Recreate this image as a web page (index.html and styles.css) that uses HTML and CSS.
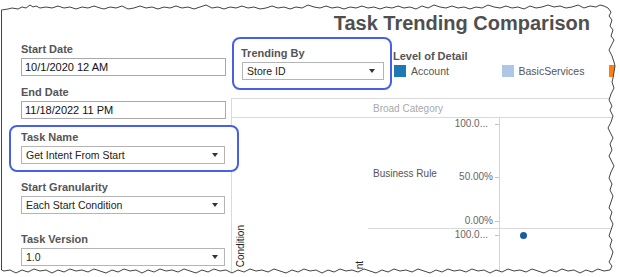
FILE: index.html
```html
<!DOCTYPE html>
<html>
<head>
<meta charset="utf-8">
<link rel="stylesheet" href="styles.css">
</head>
<body>
<div class="page">
  <aside class="filters">
    <div class="filter">
      <div class="flabel">Start Date</div>
      <div class="field">10/1/2020 12 AM</div>
    </div>
    <div class="filter f-end">
      <div class="flabel">End Date</div>
      <div class="field">11/18/2022 11 PM</div>
    </div>
    <div class="hl f-task">
      <div class="flabel">Task Name</div>
      <div class="select"><span>Get Intent From Start</span><i class="caret"></i></div>
    </div>
    <div class="filter f-gran">
      <div class="flabel">Start Granularity</div>
      <div class="select"><span>Each Start Condition</span><i class="caret"></i></div>
    </div>
    <div class="filter f-ver">
      <div class="flabel">Task Version</div>
      <div class="select"><span>1.0</span><i class="caret"></i></div>
    </div>
  </aside>
  <main class="dash">
    <h1 class="title">Task Trending Comparison</h1>
    <div class="controls">
      <div class="hl trend">
        <div class="flabel">Trending By</div>
        <div class="select"><span>Store ID</span><i class="caret"></i></div>
      </div>
      <div class="legend">
        <div class="flabel">Level of Detail</div>
        <div class="legend-items">
          <div class="litem"><span class="sw sw-a"></span>Account</div>
          <div class="litem"><span class="sw sw-b"></span>BasicServices</div>
          <div class="litem"><span class="sw sw-c"></span></div>
        </div>
      </div>
    </div>
    <div class="viz">
      <div class="viz-head">Broad Category</div>
      <div class="viz-body">
        <div class="rowhdr">
          <span class="vlabel vl-1">Condition</span>
          <span class="vlabel vl-2">nt</span>
        </div>
        <div class="panes">
          <div class="pane pane-1">
            <div class="cat">Business Rule</div>
            <div class="axis">
              <div class="tl t-top"><span class="trunc">100.0...</span><i class="tick"></i></div>
              <div class="tl t-mid"><span>50.00%</span><i class="tick"></i></div>
              <div class="tl t-bot"><span>0.00%</span><i class="tick"></i></div>
            </div>
            <div class="plot"></div>
          </div>
          <div class="pane pane-2">
            <div class="cat"></div>
            <div class="axis">
              <div class="tl t-top"><span class="trunc">100.0...</span><i class="tick"></i></div>
            </div>
            <div class="plot"><span class="dot"></span></div>
          </div>
        </div>
      </div>
    </div>
  </main>
  <svg class="torn" width="620" height="277" viewBox="0 0 620 277">
    <path class="torn-mask" fill-rule="evenodd" d="M0 0H620V277H0Z M1.5,10 8,9 12,8 18,9 22,7 26,8 30,5 33,7 36,6 40,8 46,7 52,8 58,6 64,8 70,7 76,9 82,7 88,8 94,6 100,8 104,9 110,7 116,8 122,6 128,9 134,8 140,6 146,8 152,7 158,9 164,7 170,8 176,6 182,8 188,7 194,9 200,7 206,5 212,8 218,7 224,9 230,7 236,8 242,6 248,8 254,7 260,9 266,8 272,6 278,8 284,7 290,9 296,7 302,8 308,5 314,7 320,8 326,6 332,8 338,7 344,9 350,7 356,8 362,6 368,8 374,7 380,9 386,7 392,8 398,6 404,8 410,7 416,9 422,6 428,8 434,5 440,7 446,8 452,6 458,8 464,7 470,9 476,7 482,8 488,5 494,7 500,8 506,6 512,8 518,7 524,9 530,6 536,8 542,7 548,5 554,7 560,6 566,8 572,7 578,5 584,8 590,6 596,7 600,5 604,6 608,8 611,12 609,16 612,20 610,26 613,30 611,36 614,40 611,46 609,50 612,56 614,62 615,66 614,72 613,78 612,82 614,88 611,94 609,100 612,106 610,110 613,116 611,122 608,128 611,134 613,138 610,144 612,150 609,156 611,160 614,166 611,172 609,178 612,184 610,190 613,196 611,202 609,208 612,212 610,218 613,224 611,230 609,236 612,240 610,246 613,252 611,258 609,262 612,266 610,270 604,271 598,269 592,272 586,270 580,273 574,270 568,271 562,269 556,272 550,270 544,273 538,271 532,269 526,272 520,270 514,271 508,269 502,272 496,270 490,273 484,270 478,271 472,269 466,272 460,270 454,271 448,269 442,272 436,270 430,273 424,271 418,269 412,272 406,270 400,271 394,269 388,272 382,270 376,273 370,271 364,269 358,272 352,270 346,271 340,269 334,272 328,270 322,273 316,270 310,271 304,269 298,272 292,270 286,273 280,271 274,269 268,272 262,270 256,271 250,269 244,272 238,270 232,273 226,270 220,271 214,269 208,272 202,270 196,273 190,271 184,269 178,272 172,270 166,271 160,269 154,272 148,270 142,273 136,270 130,271 124,269 118,272 112,270 106,273 100,271 94,269 88,272 82,270 76,271 70,269 64,272 58,270 52,273 46,270 40,271 34,269 28,272 22,270 16,273 10,270 4,271 1.5,270Z"/>
    <polyline class="torn-line" points="1.5,10 8,9 12,8 18,9 22,7 26,8 30,5 33,7 36,6 40,8 46,7 52,8 58,6 64,8 70,7 76,9 82,7 88,8 94,6 100,8 104,9 110,7 116,8 122,6 128,9 134,8 140,6 146,8 152,7 158,9 164,7 170,8 176,6 182,8 188,7 194,9 200,7 206,5 212,8 218,7 224,9 230,7 236,8 242,6 248,8 254,7 260,9 266,8 272,6 278,8 284,7 290,9 296,7 302,8 308,5 314,7 320,8 326,6 332,8 338,7 344,9 350,7 356,8 362,6 368,8 374,7 380,9 386,7 392,8 398,6 404,8 410,7 416,9 422,6 428,8 434,5 440,7 446,8 452,6 458,8 464,7 470,9 476,7 482,8 488,5 494,7 500,8 506,6 512,8 518,7 524,9 530,6 536,8 542,7 548,5 554,7 560,6 566,8 572,7 578,5 584,8 590,6 596,7 600,5 604,6 608,8 611,12 609,16 612,20 610,26 613,30 611,36 614,40 611,46 609,50 612,56 614,62 615,66 614,72 613,78 612,82 614,88 611,94 609,100 612,106 610,110 613,116 611,122 608,128 611,134 613,138 610,144 612,150 609,156 611,160 614,166 611,172 609,178 612,184 610,190 613,196 611,202 609,208 612,212 610,218 613,224 611,230 609,236 612,240 610,246 613,252 611,258 609,262 612,266 610,270 604,271 598,269 592,272 586,270 580,273 574,270 568,271 562,269 556,272 550,270 544,273 538,271 532,269 526,272 520,270 514,271 508,269 502,272 496,270 490,273 484,270 478,271 472,269 466,272 460,270 454,271 448,269 442,272 436,270 430,273 424,271 418,269 412,272 406,270 400,271 394,269 388,272 382,270 376,273 370,271 364,269 358,272 352,270 346,271 340,269 334,272 328,270 322,273 316,270 310,271 304,269 298,272 292,270 286,273 280,271 274,269 268,272 262,270 256,271 250,269 244,272 238,270 232,273 226,270 220,271 214,269 208,272 202,270 196,273 190,271 184,269 178,272 172,270 166,271 160,269 154,272 148,270 142,273 136,270 130,271 124,269 118,272 112,270 106,273 100,271 94,269 88,272 82,270 76,271 70,269 64,272 58,270 52,273 46,270 40,271 34,269 28,272 22,270 16,273 10,270 4,271 1.5,270 1.5,10"/>
  </svg>
</div>
</body>
</html>
```

FILE: styles.css
```css
* { box-sizing: border-box; }
body {
  margin: 0;
  background: #fff;
  font-family: "Liberation Sans", Arial, sans-serif;
}
.page {
  position: relative;
  width: 620px;
  height: 277px;
  overflow: hidden;
  display: grid;
  grid-template-columns: 231px 1fr;
}

/* filters column */
.filters {
  display: flex;
  flex-direction: column;
  align-items: flex-start;
  padding: 42px 0 0 9px;
}
.filter { padding-left: 12px; }
.f-end { margin-top: 9px; }
.f-task { margin-top: 6px; }
.f-gran { margin-top: 8px; }
.f-ver { margin-top: 18px; }

.flabel {
  font-size: 11px;
  font-weight: bold;
  color: #555;
  line-height: 14px;
  height: 14px;
  margin-bottom: 2px;
  white-space: nowrap;
}
.field {
  width: 205px;
  height: 18px;
  border: 1px solid #a9a9a9;
  padding-left: 3px;
  font-size: 11px;
  line-height: 16px;
  color: #111;
  white-space: nowrap;
}
.select {
  width: 204px;
  height: 18px;
  border: 1px solid #b4b4b4;
  padding: 0 6px 0 4px;
  font-size: 10.5px;
  line-height: 16px;
  color: #222;
  display: flex;
  justify-content: space-between;
  align-items: center;
  white-space: nowrap;
}
.caret {
  width: 0;
  height: 0;
  border-left: 3.5px solid transparent;
  border-right: 3.5px solid transparent;
  border-top: 4px solid #333;
}
.hl {
  border: 2px solid #4760e6;
  border-radius: 8px;
  background: #fff;
  position: relative;
  z-index: 1;
}
.filters .hl {
  width: 230px;
  margin-right: -8px;
  padding: 3px 0 6px 10px;
}

/* dashboard */
.dash {
  display: flex;
  flex-direction: column;
  padding-top: 11px;
  min-width: 0;
}
.title {
  margin: 0;
  font-size: 20px;
  line-height: 24px;
  font-weight: bold;
  color: #4f4f4f;
  text-align: right;
  padding-right: 30px;
  white-space: nowrap;
}
.controls {
  display: flex;
  margin-top: 2px;
  height: 53px;
  flex: none;
}
.trend {
  flex: none;
  width: 160px;
  height: 53px;
  margin-left: 1px;
  padding: 7px 0 0 7px;
}
.trend .select {
  width: 142px;
  margin-left: 1px;
  padding-right: 8px;
}
.legend {
  flex: none;
  margin-left: 1px;
  padding-top: 12px;
}
.legend-items {
  display: flex;
  padding-left: 1px;
}
.litem {
  flex: none;
  width: 107.5px;
  display: flex;
  align-items: center;
  gap: 5px;
  font-size: 10.5px;
  color: #555;
  white-space: nowrap;
}
.sw { width: 12px; height: 12px; flex: none; }
.sw-a { background: #1f77b4; }
.sw-b { background: #aec7e8; }
.sw-c { background: #ff7f0e; }

/* viz */
.viz {
  margin-top: 8px;
  flex: 1;
  border-top: 1px solid #dadada;
  border-left: 1px solid #dadada;
  display: flex;
  flex-direction: column;
}
.viz-head {
  flex: none;
  height: 19px;
  border-bottom: 1px solid #dadada;
  padding: 3px 0 0 141px;
  font-size: 10px;
  line-height: 14px;
  color: #aaa;
  white-space: nowrap;
}
.viz-body {
  flex: 1;
  display: flex;
}
.rowhdr {
  flex: none;
  width: 136px;
  display: flex;
  align-items: flex-start;
}
.vlabel {
  flex: none;
  writing-mode: vertical-rl;
  transform: rotate(180deg);
  font-size: 10px;
  line-height: 12px;
  color: #222;
  white-space: nowrap;
}
.vl-1 { margin: 107px 0 0 3px; }
.vl-2 { margin: 143px 0 0 107px; }
.panes {
  flex: 1;
  display: flex;
  flex-direction: column;
}
.pane {
  display: grid;
  grid-template-columns: 78px 53px 1fr;
}
.pane-1 {
  height: 111px;
  flex: none;
  border-bottom: 1px solid #dadada;
}
.pane-2 { flex: 1; }
.cat {
  display: flex;
  align-items: center;
  padding-left: 5px;
  font-size: 10px;
  color: #555;
  white-space: nowrap;
}
.axis { position: relative; }
.tl {
  position: absolute;
  right: 0;
  display: flex;
  align-items: center;
  font-size: 10px;
  line-height: 12px;
  color: #666;
  white-space: nowrap;
}
.t-top { top: 0; }
.t-mid { top: 53px; }
.t-bot { top: 97px; }
.trunc { margin-right: 5px; }
.tick {
  width: 4px;
  height: 1px;
  margin-left: 2px;
  background: #c4c4c4;
}
.plot {
  position: relative;
  border-left: 1px solid #d4d4d4;
}
.dot {
  position: absolute;
  left: 20px;
  top: 2.5px;
  width: 7px;
  height: 7px;
  border-radius: 50%;
  background: #1a5ba6;
}

/* torn screenshot frame */
.torn {
  position: absolute;
  left: 0;
  top: 0;
  pointer-events: none;
  z-index: 5;
}
.torn-mask { fill: #fff; }
.torn-line {
  fill: none;
  stroke: #444;
  stroke-width: 1;
}
```
